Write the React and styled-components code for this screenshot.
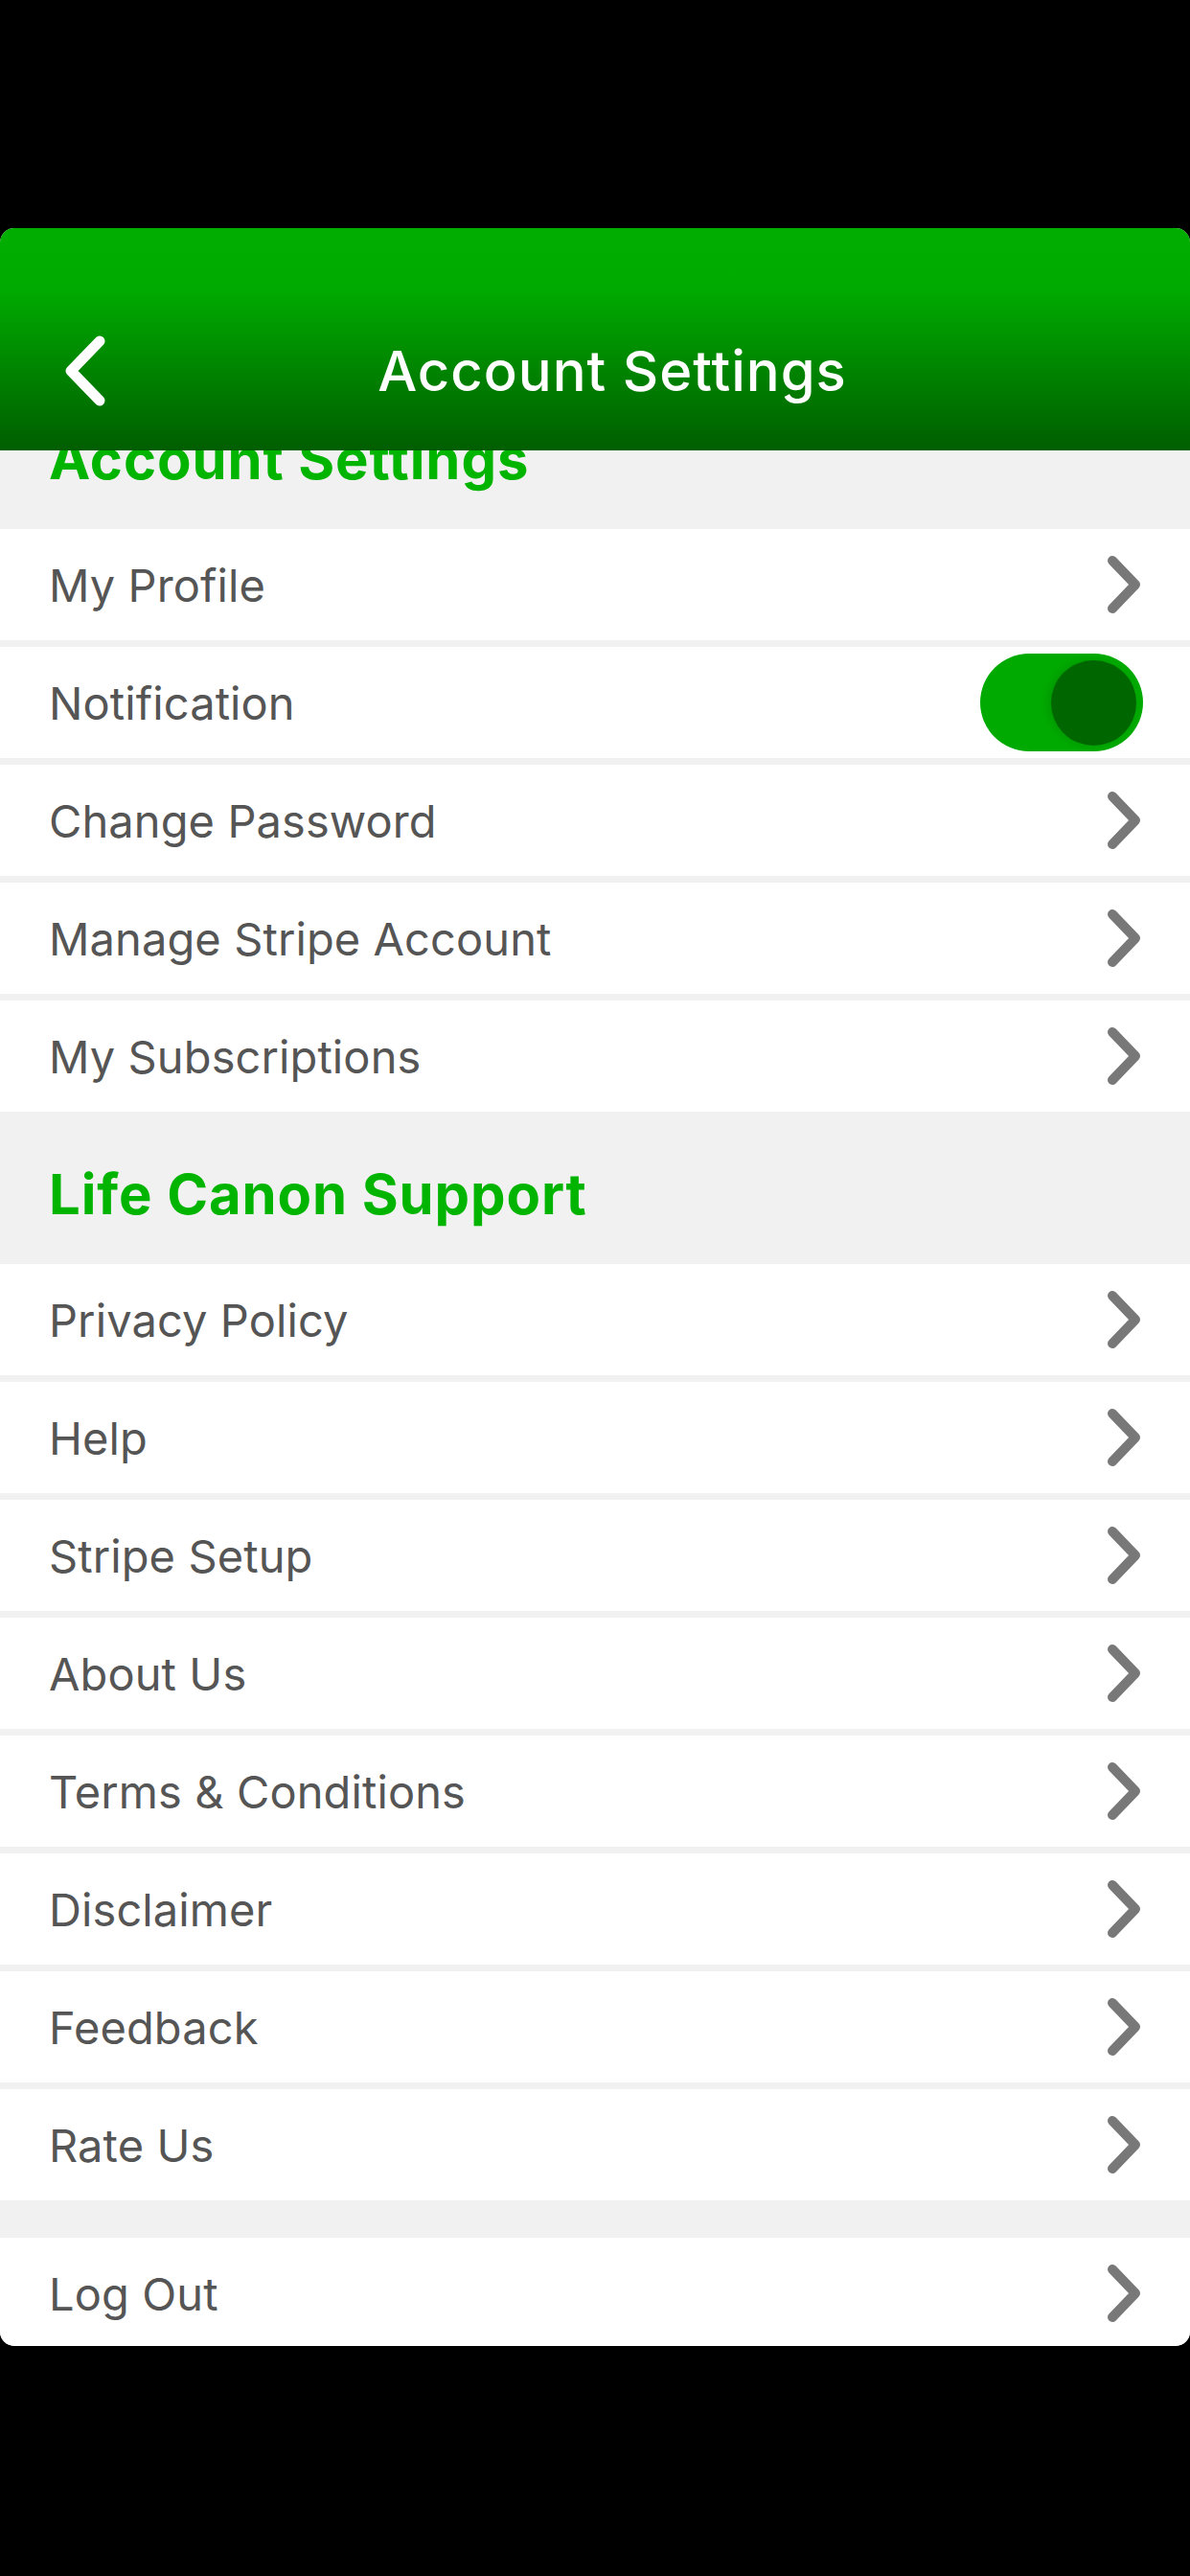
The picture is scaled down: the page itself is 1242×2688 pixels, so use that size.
import React, { useState } from 'react';
import styled, { createGlobalStyle } from 'styled-components';

const GlobalStyle = createGlobalStyle`
  html, body {
    margin: 0;
    padding: 0;
    background: #000;
  }
  * { box-sizing: border-box; }
`;

const accountItems = ['My Profile', 'Notification', 'Change Password', 'Manage Stripe Account', 'My Subscriptions'];
const supportItems = ['Privacy Policy', 'Help', 'Stripe Setup', 'About Us', 'Terms & Conditions', 'Disclaimer', 'Feedback', 'Rate Us'];

function Chevron() {
  return (
    <ChevronIcon viewBox="0 0 40 60">
      <path d="M8 5 L32 30 L8 55" fill="none" stroke="#787878" strokeWidth="10" strokeLinecap="round" strokeLinejoin="round" />
    </ChevronIcon>
  );
}

function Row({ label, children }) {
  return (
    <Item>
      <Label>{label}</Label>
      {children || <Chevron />}
    </Item>
  );
}

function App() {
  const [notify, setNotify] = useState(true);

  return (
    <Screen>
      <GlobalStyle />
      <Card>
        <Header>
          <BackButton>
            <svg width="50" height="76" viewBox="0 0 50 76">
              <path d="M38 7 L8 38 L38 69" fill="none" stroke="#fff" strokeWidth="11" strokeLinecap="round" strokeLinejoin="round" />
            </svg>
          </BackButton>
          <Title>Account Settings</Title>
          <span />
        </Header>
        <Viewport>
          {/* list is scrolled up a little, the first section title sits under the header */}
          <Scroller>
            <SectionTitle>Account Settings</SectionTitle>
            <Group>
              {accountItems.map((item) =>
                item === 'Notification' ? (
                  <Row key={item} label={item}>
                    <Toggle $on={notify} onClick={() => setNotify(!notify)}>
                      <Knob $on={notify} />
                    </Toggle>
                  </Row>
                ) : (
                  <Row key={item} label={item} />
                )
              )}
            </Group>
            <SectionTitle>Life Canon Support</SectionTitle>
            <Group>
              {supportItems.map((item) => (
                <Row key={item} label={item} />
              ))}
            </Group>
            <Spacer />
            <Group>
              <Row label="Log Out" />
            </Group>
          </Scroller>
        </Viewport>
      </Card>
    </Screen>
  );
}
export default App;

const Screen = styled.div`
  width: 1242px;
  height: 2688px;
  background: #000;
  padding-top: 238px;
  font-family: Inter, "Liberation Sans", sans-serif;`;

const Card = styled.div`
  height: 2210px;
  background: #f1f1f1;
  border-radius: 15px;
  overflow: hidden;
  display: flex;
  flex-direction: column;`;

const Header = styled.div`
  height: 232px;
  flex-shrink: 0;
  padding-top: 66px;
  display: grid;
  grid-template-columns: 120px 1fr 84px;
  align-items: center;
  background: linear-gradient(180deg, #00ae00 0%, #00aa00 28%, #005e00 100%);`;

const BackButton = styled.div`
  display: flex;
  align-items: center;
  padding-left: 66px;
  height: 100%;`;

const Title = styled.div`
  text-align: center;
  color: #fff;
  font-size: 58px;
  font-weight: 500;
  letter-spacing: 1px;`;

const Viewport = styled.div`
  flex: 1;
  overflow: hidden;`;

const Scroller = styled.div`
  margin-top: -77px;
  display: flex;
  flex-direction: column;`;

const SectionTitle = styled.div`
  height: 159px;
  padding: 12px 0 0 51px;
  display: flex;
  align-items: center;
  color: #00b400;
  font-size: 58px;
  font-weight: 700;
  letter-spacing: 0.9px;`;

const Group = styled.div`
  display: flex;
  flex-direction: column;
  gap: 7px;`;

const Item = styled.div`
  height: 116px;
  background: #fff;
  display: flex;
  align-items: center;
  justify-content: space-between;
  padding: 0 49px 0 51px;`;

const Label = styled.div`
  color: #555;
  font-size: 47px;
  font-weight: 400;
  letter-spacing: 0.1px;`;

const ChevronIcon = styled.svg`
  width: 40px;
  height: 60px;`;

const Toggle = styled.div`
  width: 170px;
  height: 102px;
  border-radius: 51px;
  background: ${(p) => (p.$on ? '#00aa00' : '#ddd')};
  display: flex;
  align-items: center;
  justify-content: ${(p) => (p.$on ? 'flex-end' : 'flex-start')};
  padding: 0 7px;
  cursor: pointer;`;

const Knob = styled.div`
  width: 89px;
  height: 89px;
  border-radius: 50%;
  background: ${(p) => (p.$on ? '#006600' : '#fff')};
  box-shadow: -3px 0 8px rgba(0, 0, 0, 0.12);`;

const Spacer = styled.div`
  height: 39px;`;
